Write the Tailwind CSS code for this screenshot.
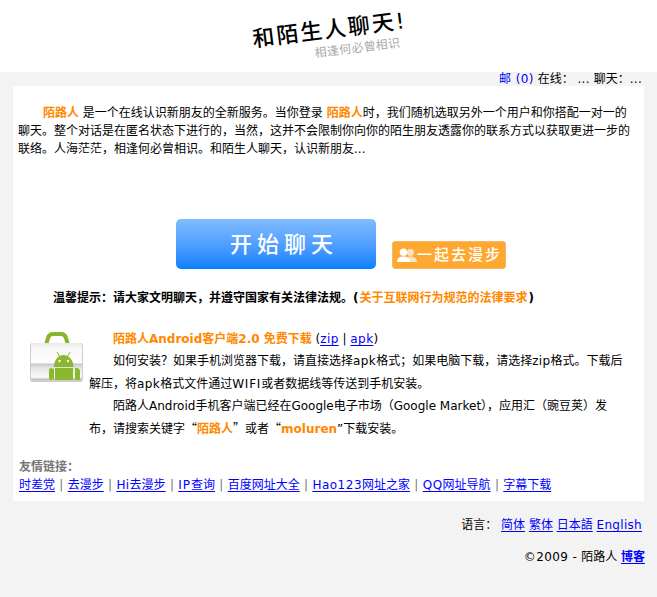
<!DOCTYPE html>
<html lang="zh-CN">
<head>
    <meta charset="UTF-8" />
    <meta name="viewport" content="width=device-width, initial-scale=1.0" />
    <title>和陌生人聊天</title>
    <script src="https://cdn.jsdelivr.net/npm/@tailwindcss/browser@4"></script>
</head>
<body class="bg-[#f3f3f3] text-black text-[12px] font-['DejaVu_Sans','Noto_Sans_CJK_SC',sans-serif]">

<!-- logo -->
<div class="h-[72px] bg-white overflow-hidden">
    <div class="w-[160px] ml-[252px] pt-[17px] -rotate-[7deg]">
        <div class="text-[22px] leading-[26px] font-medium tracking-[2px] whitespace-nowrap">和陌生人聊天!</div>
        <div class="text-[12px] leading-[14px] tracking-[0.3px] text-[#aaa] ml-[60px] mt-[1px] whitespace-nowrap">相逢何必曾相识</div>
    </div>
</div>

<!-- status -->
<div class="h-[14px] leading-[14px] text-right pr-[15px] whitespace-nowrap">
    <a href="#" class="text-[#0000ff] tracking-[0.4px]">邮 (0)</a> 在线： <span class="tracking-[0.3px]">...</span> 聊天：<span class="tracking-[0.3px]">...</span>
</div>

<div class="mx-[13px] h-[415px] bg-white flex flex-col">
    <p class="pt-[18px] pl-[5px] pr-[14px] leading-[18px] indent-[25px]">
        <b class="text-[#ff8800]">陌路人</b> 是一个在线认识新朋友的全新服务。当你登录 <b class="text-[#ff8800]">陌路人</b>时，我们随机选取另外一个用户和你搭配一对一的聊天。整个对话是在匿名状态下进行的，当然，这并不会限制你向你的陌生朋友透露你的联系方式以获取更进一步的联络。人海茫茫，相逢何必曾相识。和陌生人聊天，认识新朋友...
    </p>

    <!-- buttons -->
    <div class="mt-[61px] ml-[163px] flex items-end gap-[16px]">
        <a href="#" class="w-[200px] h-[50px] rounded-[5px] bg-gradient-to-b from-[#82bcff] to-[#0080ff] text-white text-[22px] font-medium tracking-[5px] flex items-center justify-center pl-[16px] pt-[1px]">开始聊天</a>
        <a href="#" class="w-[114px] h-[28px] rounded-[3px] bg-[#fea832] border border-[#f5b869] text-white text-[15px] font-medium tracking-[2px] flex items-center pl-[4px]">
            <svg class="w-[20px] h-[15px] shrink-0" viewBox="0 0 20 15">
                <circle cx="13.5" cy="4.5" r="3.4" fill="#f5e4cc"/>
                <path d="M9 14c0-3 1-4.500 3-5.500h3c3 1 5 2.500 5 5.500z" fill="#f5e4cc"/>
                <circle cx="6.500" cy="4.200" r="3.800" fill="#fff"/>
                <path d="M0 14c0-3 1.500-4.500 4.500-5.500h4c3 1 4.500 2.500 4.500 5.500z" fill="#fff"/>
            </svg>
            <span>一起去漫步</span>
        </a>
    </div>

    <p class="mt-[20px] ml-[40px] leading-[18px] font-bold">温馨提示：请大家文明聊天，并遵守国家有关法律法规。<span class="tracking-[1px]">(</span><span class="text-[#ff8800]">关于互联网行为规范的法律要求</span><span class="pl-[1px]">)</span></p>

    <!-- android -->
    <div class="mt-[21px] flex">
        <svg class="ml-[12px] w-[62px] h-[58px] shrink-0" viewBox="0 0 62 58">
            <defs>
                <linearGradient id="bag" x1="0" y1="0" x2="0" y2="1">
                    <stop offset="0" stop-color="#e8e8e8"/><stop offset=".12" stop-color="#f6f6f6"/><stop offset=".53" stop-color="#fff"/><stop offset=".57" stop-color="#c9c9c9"/><stop offset=".68" stop-color="#e6e6e6"/><stop offset=".92" stop-color="#fafafa"/><stop offset="1" stop-color="#b5b5b5"/>
                </linearGradient>
                <clipPath id="bagclip"><rect x="6" y="15" width="51" height="37" rx="3"/></clipPath>
            </defs>
            <path d="M21 17L23 10Q24 6 28 6H36Q40 6 41 10L43 17" fill="none" stroke="#86b62c" stroke-width="4"/>
            <rect x="5" y="15" width="53" height="39" rx="3" fill="#000" fill-opacity=".2"/>
            <rect x="6" y="15" width="51" height="37" rx="3" fill="url(#bag)"/>
            <g clip-path="url(#bagclip)" fill="#8ab82e">
                <path d="M29 39c0-7 4-12 9.500-12s10 5 10 12z"/>
                <path d="M30 40h18v14H30z"/>
                <path d="M26 40l3 1v10l-3 1c-1 0-2-1-2-2v-8c0-1 1-2 2-2z"/>
                <path d="M50 40h2c2 0 3 2 3 3v8c0 2-1 3-3 3h-2z"/>
                <path d="M32 24l3 5M45 24l-3 5" stroke="#8ab82e" stroke-width="1"/>
                <circle cx="34.500" cy="33" r="1.200" fill="#fff"/>
                <circle cx="43" cy="33" r="1.200" fill="#fff"/>
            </g>
        </svg>
        <div class="ml-[2px] mr-[20px] leading-[22.3px]">
            <p class="indent-[24px]"><b class="text-[#ff8800]">陌路人Android客户端2.0 免费下载</b> (<a href="#" class="text-[#0000ff] underline underline-offset-2 tracking-[0.4px]">zip</a> | <a href="#" class="text-[#0000ff] underline underline-offset-2 tracking-[0.4px]">apk</a>)</p>
            <p class="indent-[24px]">如何安装？如果手机浏览器下载，请直接选择<span class="tracking-[0.4px]">apk</span>格式；如果电脑下载，请选择<span class="tracking-[0.4px]">zip</span>格式。下载后解压，将<span class="tracking-[0.4px]">apk</span>格式文件通过<span class="tracking-[0.8px]">WIFI</span>或者数据线等传送到手机安装。</p>
            <p class="indent-[24px]">陌路人Android手机客户端已经在Google电子市场（Google Market），应用汇（豌豆荚）发布，请搜索关键字<span class="font-['Noto_Sans_CJK_SC']">“</span><b class="text-[#ff8800]">陌路人</b><span class="font-['Noto_Sans_CJK_SC']">”</span>或者<span class="font-['Noto_Sans_CJK_SC']">“</span><b class="text-[#ff8800]">moluren</b>”下载安装。</p>
        </div>
    </div>

    <!-- links -->
    <div class="mt-[18px] ml-[6px] leading-[18px]">
        <div class="font-bold text-[#777]">友情链接：</div>
        <div class="text-[#777] [word-spacing:0.5px]"><a href="#" class="text-[#0000ff] underline underline-offset-2">时差党</a> | <a href="#" class="text-[#0000ff] underline underline-offset-2">去漫步</a> | <a href="#" class="text-[#0000ff] underline underline-offset-2"><span class="tracking-[0.4px]">Hi</span>去漫步</a> | <a href="#" class="text-[#0000ff] underline underline-offset-2"><span class="tracking-[1px]">IP</span>查询</a> | <a href="#" class="text-[#0000ff] underline underline-offset-2">百度网址大全</a> | <a href="#" class="text-[#0000ff] underline underline-offset-2"><span class="tracking-[0.5px]">Hao123</span>网址之家</a> | <a href="#" class="text-[#0000ff] underline underline-offset-2"><span class="tracking-[0.5px]">QQ</span>网址导航</a> | <a href="#" class="text-[#0000ff] underline underline-offset-2">字幕下载</a></div>
    </div>
</div>

<!-- footer -->
<div class="pr-[15px] pt-[15px] text-right leading-[18px]">
    语言： <a href="#" class="text-[#0000ff] underline underline-offset-2">简体</a> <a href="#" class="text-[#0000ff] underline underline-offset-2">繁体</a> <a href="#" class="text-[#0000ff] underline underline-offset-2">日本語</a> <a href="#" class="text-[#0000ff] underline underline-offset-2 tracking-[0.3px]">English</a>
</div>
<div class="pr-[12px] pt-[14px] text-right leading-[18px]">
    <span class="tracking-[0.4px]">©2009 -</span> 陌路人 <a href="#" class="text-[#0000ff] underline underline-offset-2 font-bold">博客</a>
</div>

</body>
</html>
